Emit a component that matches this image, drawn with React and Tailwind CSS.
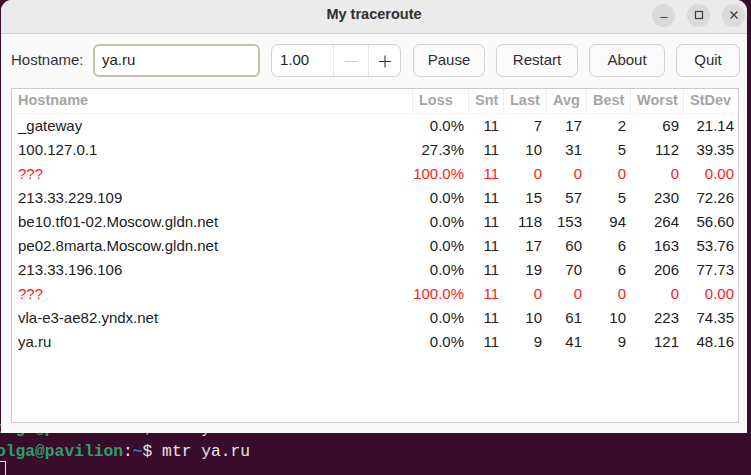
import React from "react";

const rows = [
  ["_gateway", "0.0%", "11", "7", "17", "2", "69", "21.14"],
  ["100.127.0.1", "27.3%", "11", "10", "31", "5", "112", "39.35"],
  ["???", "100.0%", "11", "0", "0", "0", "0", "0.00", true],
  ["213.33.229.109", "0.0%", "11", "15", "57", "5", "230", "72.26"],
  ["be10.tf01-02.Moscow.gldn.net", "0.0%", "11", "118", "153", "94", "264", "56.60"],
  ["pe02.8marta.Moscow.gldn.net", "0.0%", "11", "17", "60", "6", "163", "53.76"],
  ["213.33.196.106", "0.0%", "11", "19", "70", "6", "206", "77.73"],
  ["???", "100.0%", "11", "0", "0", "0", "0", "0.00", true],
  ["vla-e3-ae82.yndx.net", "0.0%", "11", "10", "61", "10", "223", "74.35"],
  ["ya.ru", "0.0%", "11", "9", "41", "9", "121", "48.16"],
];

const headers = ["Hostname", "Loss", "Snt", "Last", "Avg", "Best", "Worst", "StDev"];
const cols = "grid grid-cols-[400px_56px_35px_43px_40px_44px_53px_55px]";

function Prompt() {
  return (
    <div className="h-[23px] leading-[23px] whitespace-pre">
      <span className="text-[#2aa16a] font-bold">olga@pavilion</span>
      <span className="text-[#e6e6e6]">:</span>
      <span className="text-[#3b6fc0] font-bold">~</span>
      <span className="text-[#e6e6e6]">$ mtr ya.ru</span>
    </div>
  );
}

function Btn({ children, w }) {
  return (
    <div
      className={`h-[33px] ${w} shrink-0 flex items-center justify-center rounded-[7px] border border-[#d0d0d0] bg-[#fbfbfb] text-[#2e2e2e]`}
    >
      {children}
    </div>
  );
}

export default function App() {
  return (
    <div
      className="relative w-[751px] h-[475px] overflow-hidden bg-[#380c2a]"
      style={{ fontFamily: '"Liberation Sans", Arial, sans-serif' }}
    >
      {/* terminal */}
      <div
        className="absolute left-[-4px] top-[417px] flex flex-col text-[16.3px]"
        style={{ fontFamily: '"Liberation Mono", "DejaVu Sans Mono", monospace' }}
      >
        <Prompt />
        <Prompt />
        <div className="h-[23px]">
          <div className="-mt-[2px] w-[10px] h-[22px] border border-[#e6e6e6]" />
        </div>
      </div>

      {/* window */}
      <div className="absolute left-[1px] top-0 w-[746px] h-[433px] flex flex-col rounded-t-[11px] bg-[#fafafa] overflow-hidden">
        {/* title bar */}
        <div className="h-[34px] shrink-0 flex items-center bg-[#ebebeb] border-b border-[#d3d3d3] relative">
          <div className="absolute inset-0 flex items-center justify-center font-bold text-[14.5px] text-[#2f2f2f] pb-[3px]">
            My traceroute
          </div>
          <div className="ml-auto mr-[2px] flex items-center gap-[12px] relative pb-[3px]">
            <div className="w-[23px] h-[23px] rounded-full bg-[#dadada] flex items-center justify-center">
              <svg width="10" height="10" viewBox="0 0 10 10">
                <line x1="1.5" y1="7.5" x2="8.5" y2="7.5" stroke="#3a3a3a" strokeWidth="1.2" />
              </svg>
            </div>
            <div className="w-[23px] h-[23px] rounded-full bg-[#dadada] flex items-center justify-center">
              <svg width="10" height="10" viewBox="0 0 10 10">
                <rect x="1.5" y="1.5" width="7" height="7" fill="none" stroke="#3a3a3a" strokeWidth="1.2" />
              </svg>
            </div>
            <div className="w-[23px] h-[23px] rounded-full bg-[#dadada] flex items-center justify-center">
              <svg width="10" height="10" viewBox="0 0 10 10">
                <path d="M1.5 1.5 L8.5 8.5 M8.5 1.5 L1.5 8.5" stroke="#3a3a3a" strokeWidth="1.2" />
              </svg>
            </div>
          </div>
        </div>

        {/* body */}
        <div className="flex-1 flex flex-col pl-[10px] pr-[8px] pt-[10px] pb-[10px] text-[15px]">
          {/* toolbar */}
          <div className="h-[33px] flex items-center">
            <div className="text-[#333] w-[82px] shrink-0">Hostname:</div>
            <div className="h-[33px] w-[167px] shrink-0 rounded-[6px] border-2 border-[#c3c1ad] bg-white flex items-center pl-[7px] text-[#1e1e1e]">
              ya.ru
            </div>
            <div className="ml-[11px] h-[33px] w-[130px] shrink-0 rounded-[7px] border border-[#d0d0d0] bg-white flex">
              <div className="w-[61px] flex items-center pl-[8px] text-[#1e1e1e]">1.00</div>
              <div className="w-[35px] border-l border-[#e6e6e6] flex items-center justify-center">
                <svg width="14" height="14" viewBox="0 0 14 14">
                  <line x1="1" y1="7.5" x2="13" y2="7.5" stroke="#c8c8c8" strokeWidth="1" />
                </svg>
              </div>
              <div className="flex-1 border-l border-[#e6e6e6] flex items-center justify-center">
                <svg width="14" height="14" viewBox="0 0 14 14">
                  <path d="M1 7.5 H13 M7 1.5 V13.5" stroke="#333" strokeWidth="1.1" />
                </svg>
              </div>
            </div>
            <div className="ml-[12px] flex gap-[11px]">
              <Btn w="w-[72px]">Pause</Btn>
              <Btn w="w-[82px]">Restart</Btn>
              <Btn w="w-[76px]">About</Btn>
              <Btn w="w-[64px]">Quit</Btn>
            </div>
          </div>

          {/* table */}
          <div className="mt-[11px] w-[728px] flex-1 border border-[#cbcbcb] bg-white overflow-hidden">
            <div className={`${cols} h-[25px] border-b border-[#f0f0f0]`}>
              {headers.map((h, i) => (
                <div
                  key={h}
                  className={`flex items-center pl-[6px] font-bold text-[14.5px] text-[#a5a5a5] ${
                    i > 0 ? "border-l border-[#eeeeee]" : ""
                  }`}
                >
                  {h}
                </div>
              ))}
            </div>
            {rows.map((r, ri) => {
              const red = r[8];
              return (
                <div
                  key={ri}
                  className={`${cols} h-[24px] ${red ? "text-[#ff1a1a]" : "text-[#1c1c1c]"}`}
                >
                  <div className="flex items-center pl-[6px]">{r[0]}</div>
                  {r.slice(1, 8).map((c, ci) => (
                    <div key={ci} className="flex items-center justify-end pr-[4px]">
                      {c}
                    </div>
                  ))}
                </div>
              );
            })}
          </div>
        </div>
      </div>
    </div>
  );
}
